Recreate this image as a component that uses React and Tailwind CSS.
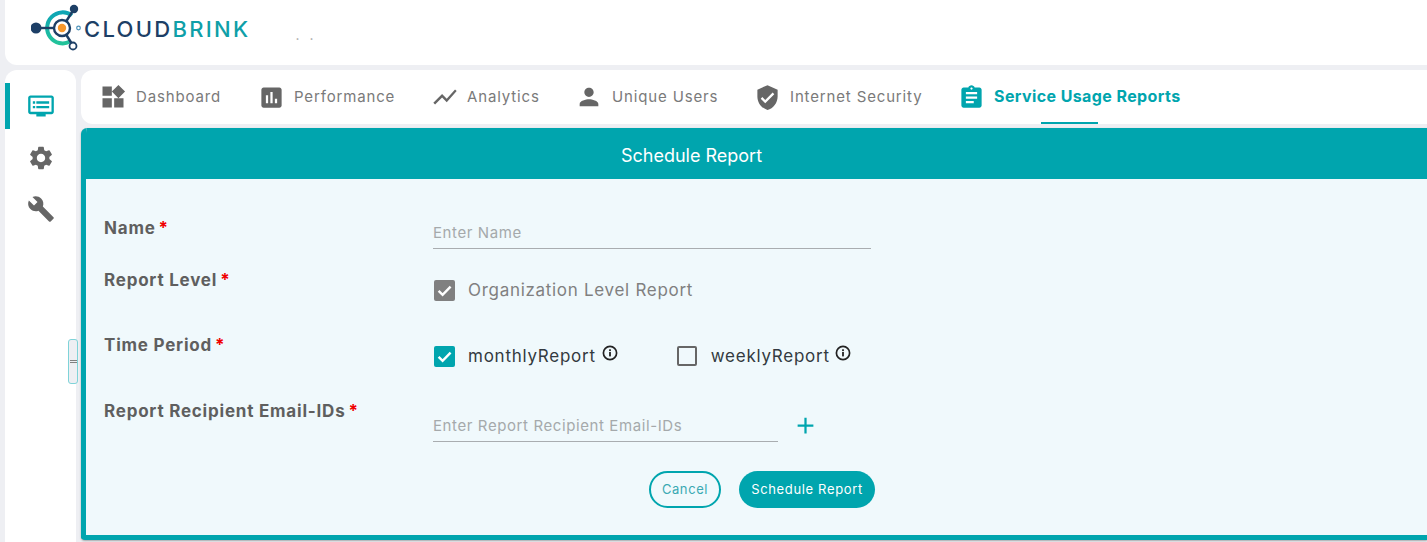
import React from "react";
import {
  MdWidgets,
  MdAssessment,
  MdShowChart,
  MdPerson,
  MdVerifiedUser,
  MdAssignment,
  MdDvr,
  MdSettings,
  MdBuild,
  MdAdd,
} from "react-icons/md";

const tabs = [
  { label: "Dashboard", icon: MdWidgets, iconSize: 28, gap: "gap-[9px]", ml: "ml-[-3px]", width: "w-[159px]" },
  { label: "Performance", icon: MdAssessment, iconSize: 27, gap: "gap-[9px]", ml: "ml-0", width: "w-[173px]" },
  { label: "Analytics", icon: MdShowChart, iconSize: 28, gap: "gap-[8px]", ml: "ml-0", width: "w-[144px]" },
  { label: "Unique Users", icon: MdPerson, iconSize: 28, gap: "gap-[9px]", ml: "ml-0", width: "w-[179px]" },
  { label: "Internet Security", icon: MdVerifiedUser, iconSize: 27, gap: "gap-[9px]", ml: "ml-0", width: "w-[204px]" },
];

function Logo() {
  return (
    <svg width="54" height="52" viewBox="0 0 54 52" className="shrink-0">
      <defs>
        <linearGradient id="ring" x1="0" y1="0" x2="0" y2="1">
          <stop offset="0" stopColor="#0ea5b5" />
          <stop offset="1" stopColor="#22c39a" />
        </linearGradient>
      </defs>
      <path d="M41 15.5 A15.5 15.5 0 1 0 39 41.5" fill="none" stroke="url(#ring)" strokeWidth="4" />
      <line x1="5" y1="28" x2="31" y2="28" stroke="#1d3f66" strokeWidth="2.4" />
      <line x1="31" y1="28" x2="43" y2="9" stroke="#1d3f66" strokeWidth="2.4" />
      <line x1="31" y1="28" x2="41" y2="44" stroke="#1d3f66" strokeWidth="2.4" />
      <circle cx="5" cy="28" r="5.5" fill="#1d3f66" />
      <circle cx="43" cy="9" r="4.2" fill="#1d3f66" />
      <circle cx="42" cy="46" r="3.5" fill="#fff" stroke="#1d3f66" strokeWidth="1.8" />
      <circle cx="31" cy="28" r="8" fill="#fff" stroke="#1d3f66" strokeWidth="2.4" />
      <circle cx="31" cy="28" r="4.2" fill="#f8972a" />
      <circle cx="47.5" cy="28" r="1.8" fill="#fff" stroke="#4a90b8" strokeWidth="1.2" />
    </svg>
  );
}

function InfoIcon({ className }) {
  return (
    <svg width="16" height="16" viewBox="0 0 16 16" className={className}>
      <circle cx="8" cy="8" r="6.6" fill="none" stroke="#222222" strokeWidth="1.7" />
      <rect x="7.1" y="7" width="1.8" height="4.4" fill="#222222" />
      <rect x="7.1" y="4.3" width="1.8" height="1.8" fill="#222222" />
    </svg>
  );
}

function CheckBox({ checked, color }) {
  if (!checked) {
    return <span className="w-[20px] h-[20px] rounded-[2px] border-2 border-[#666666] shrink-0" />;
  }
  return (
    <span className={`w-[21px] h-[21px] rounded-[2px] flex items-center justify-center shrink-0 ${color}`}>
      <svg width="21" height="21" viewBox="0 0 21 21">
        <path d="M4.6 10.8 L8.6 14.8 L16.6 6.6" fill="none" stroke="#ffffff" strokeWidth="2.4" />
      </svg>
    </span>
  );
}

function FormRow({ label, height, children }) {
  return (
    <div className={`flex ${height}`}>
      <div className="w-[329px] shrink-0 text-[17px] leading-[24px] font-bold tracking-[0.78px] text-[#5f5f5f] whitespace-nowrap">
        {label}
        <span className="text-[#f00000] ml-[3px]">*</span>
      </div>
      <div className="flex-1">{children}</div>
    </div>
  );
}

export default function App() {
  return (
    <div
      className="relative w-[1427px] h-[542px] overflow-hidden bg-[#eeeff3] pl-[5px] flex flex-col gap-[5px]"
      style={{ fontFamily: "Inter, sans-serif" }}
    >
      {/* Header */}
      <header className="h-[65px] bg-white rounded-bl-[12px] flex items-start pl-[26px] shrink-0">
        <Logo />
        <div className="ml-[-1px] mt-[16px] text-[22px] leading-[26px] tracking-[2.3px] font-medium text-[#1d3f66] whitespace-nowrap">
          CLOUD<span className="text-[#0f9fa8]">BRINK</span>
        </div>
        <span className="ml-[45px] mt-[25px] text-[14px] leading-[20px] tracking-[10px] text-[#a8a8a8]">..</span>
      </header>

      <div className="flex-1 flex gap-[5px] min-h-0">
        {/* Sidebar */}
        <aside className="w-[71px] shrink-0 bg-white rounded-t-[12px] pt-[13px] flex flex-col">
          <div className="relative h-[46px] flex items-center justify-center">
            <span className="absolute left-0 top-0 w-[5px] h-[46px] bg-[#00a5ae]" />
            <MdDvr size={28} color="#00a5ae" />
          </div>
          <div className="h-[52px] mt-[3px] flex items-center justify-center">
            <MdSettings size={28} color="#666666" />
          </div>
          <div className="h-[50px] flex items-center justify-center">
            <MdBuild size={28} color="#666666" />
          </div>
        </aside>

        <main className="flex-1 min-w-0 flex flex-col gap-[4px]">
          {/* Tabs */}
          <nav className="h-[54px] bg-white rounded-l-[12px] flex items-center pl-[21px] shrink-0">
            {tabs.map((tab) => (
              <div key={tab.label} className={`flex items-center shrink-0 ${tab.gap} ${tab.ml} ${tab.width}`}>
                <tab.icon size={tab.iconSize} color="#666666" className="shrink-0" />
                <span className="text-[15px] tracking-[0.85px] text-[#7a7a7a] whitespace-nowrap">{tab.label}</span>
              </div>
            ))}
            <div className="relative h-full flex items-center gap-[9px] text-[#00a5ae]">
              <MdAssignment size={27} className="shrink-0" />
              <span className="mb-[2px] text-[16px] tracking-[0.4px] font-bold whitespace-nowrap">Service Usage Reports</span>
              <span className="absolute bottom-0 left-[83px] w-[57px] h-[2px] bg-[#00a5ae]" />
            </div>
          </nav>

          {/* Schedule form */}
          <section className="h-[412px] mb-[2px] flex flex-col rounded-tl-[6px] rounded-bl-[4px] overflow-hidden border-l-[5px] border-b-[5px] border-[#00a5ae] bg-[#f0f9fc] shadow-[0_1px_2px_rgba(0,0,0,0.3)]">
            <div className="h-[51px] shrink-0 bg-[#00a5ae] text-white text-[18px] flex items-center justify-center pr-[130px] pt-[3px]">
              <span>Schedule Report</span>
            </div>
            <div className="pt-[37px] pl-[18px] flex-1">
              <FormRow label="Name" height="h-[52px]">
                <div className="w-[438px] h-[33px] border-b border-[#a9adb0] pt-[6px] text-[15px] leading-[22px] tracking-[0.6px] text-[#a5a9ab]">
                  Enter Name
                </div>
              </FormRow>
              <FormRow label="Report Level" height="h-[65px]">
                <div className="flex items-center gap-[13px] pt-[10px] ml-[1px]">
                  <CheckBox checked color="bg-[#808080]" />
                  <span className="text-[17px] tracking-[0.7px] leading-[24px] text-[#808080]">Organization Level Report</span>
                </div>
              </FormRow>
              <FormRow label="Time Period" height="h-[66px]">
                <div className="flex items-center pt-[11px] ml-[1px]">
                  <CheckBox checked color="bg-[#00a5ae]" />
                  <span className="ml-[13px] text-[17px] tracking-[0.75px] leading-[24px] text-[#333a40]">monthlyReport</span>
                  <InfoIcon className="ml-[6px] mb-[6px] shrink-0" />
                  <span className="ml-[59px]" />
                  <CheckBox checked={false} />
                  <span className="ml-[14px] text-[17px] tracking-[0.75px] leading-[24px] text-[#333a40]">weeklyReport</span>
                  <InfoIcon className="ml-[5px] mb-[6px] shrink-0" />
                </div>
              </FormRow>
              <FormRow label="Report Recipient Email-IDs" height="h-[72px]">
                <div className="flex items-start">
                  <div className="w-[345px] h-[43px] border-b border-[#a9adb0] pt-[16px] text-[15px] leading-[22px] tracking-[0.6px] text-[#a5a9ab] whitespace-nowrap">
                    Enter Report Recipient Email-IDs
                  </div>
                  <MdAdd size={27} color="#00a5ae" className="ml-[14px] mt-[13px]" />
                </div>
              </FormRow>
              <div className="flex gap-[18px] pl-[545px]">
                <button className="w-[72px] h-[37px] rounded-full border-2 border-[#00a5ae] text-[13px] tracking-[0.6px] text-[#3aa9b3]">
                  Cancel
                </button>
                <button className="w-[136px] h-[37px] rounded-full bg-[#00a5ae] text-[13px] tracking-[0.65px] text-white whitespace-nowrap">
                  Schedule Report
                </button>
              </div>
            </div>
          </section>
        </main>
      </div>

      {/* Sidebar resize handle */}
      <div className="absolute left-[68px] top-[339px] w-[10px] h-[45px] rounded-[3px] border border-[#7fd3d8] bg-[#eeeff3] flex flex-col items-center justify-center gap-[1px]">
        <span className="w-[7px] h-px bg-[#808080]" />
        <span className="w-[7px] h-px bg-[#808080]" />
      </div>
    </div>
  );
}
